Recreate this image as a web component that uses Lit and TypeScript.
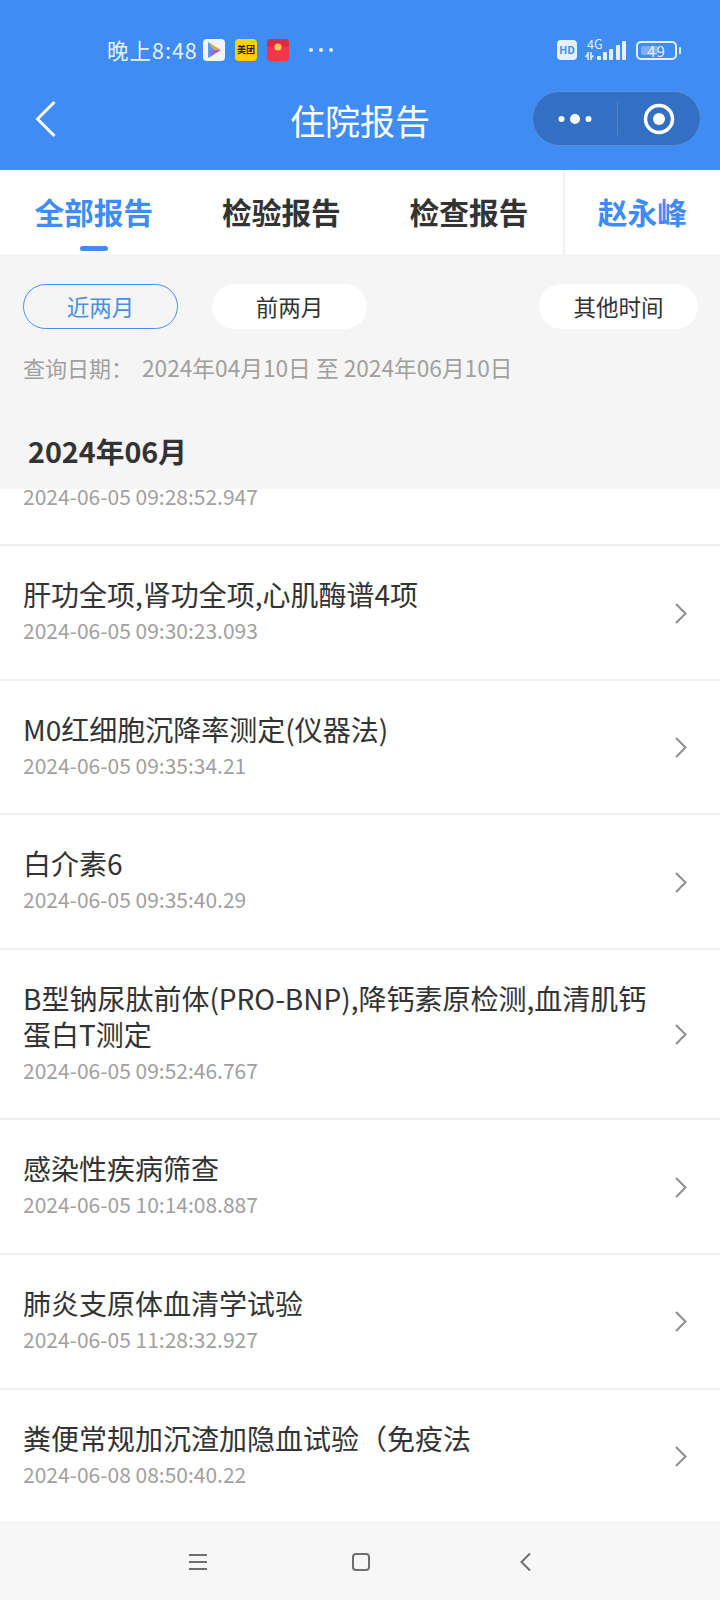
import { LitElement, html, css, svg } from "lit";
import { customElement } from "lit/decorators.js";

const rows: { title: string[]; time: string }[] = [
  { title: ["肝功全项,肾功全项,心肌酶谱4项"], time: "2024-06-05 09:30:23.093" },
  { title: ["M0红细胞沉降率测定(仪器法)"], time: "2024-06-05 09:35:34.21" },
  { title: ["白介素6"], time: "2024-06-05 09:35:40.29" },
  { title: ["B型钠尿肽前体(PRO-BNP),降钙素原检测,血清肌钙", "蛋白T测定"], time: "2024-06-05 09:52:46.767" },
  { title: ["感染性疾病筛查"], time: "2024-06-05 10:14:08.887" },
  { title: ["肺炎支原体血清学试验"], time: "2024-06-05 11:28:32.927" },
  { title: ["粪便常规加沉渣加隐血试验（免疫法"], time: "2024-06-08 08:50:40.22" },
];

const chevron = svg`<path d="M2 2 L11.5 11.5 L2 21" fill="none" stroke="#8e8e8e" stroke-width="2"/>`;

@customElement("app-root")
export class AppRoot extends LitElement {
  static styles = css`
    :host {
      display: block;
      width: 720px;
      height: 1600px;
      overflow: hidden;
      font-family: "Noto Sans CJK SC", "Noto Sans", sans-serif;
      background: #fff;
    }
    .page { display: flex; flex-direction: column; height: 1600px; }
    .header { background: #408cf5; height: 170px; flex: none; color: #fff; display: flex; flex-direction: column; }
    .status { display: flex; align-items: center; height: 30px; margin-top: 35px; padding-left: 107px; }
    .clock { font-size: 21.5px; line-height: 30px; color: #e6f0fd; letter-spacing: 1px; width: 96px; white-space: nowrap; }
    .app { width: 22px; height: 22px; border-radius: 4px; flex: none; margin-right: 10px; display: flex; align-items: center; justify-content: center; }
    .app svg { display: block; }
    .play { background: #f2f4f8; }
    .meituan { background: #ffd100; color: #222; font-size: 9px; line-height: 22px; font-weight: 700; white-space: nowrap; overflow: hidden; }
    .packet { background: #f5364a; }
    .more { display: flex; gap: 6px; margin-left: 10px; }
    .more i { width: 4px; height: 4px; border-radius: 50%; background: #e6f0fd; }
    .sys { margin-left: auto; margin-right: 39px; display: flex; align-items: center; }
    .hd { width: 20px; height: 20px; border-radius: 4px; background: #e6f0fd; color: #408cf5; font-size: 10.5px; line-height: 20px; font-weight: 700; text-align: center; margin-right: 8px; }
    .net { position: relative; width: 42px; height: 20px; margin-right: 9px; }
    .net span { position: absolute; left: 2px; top: -3px; font-size: 12.5px; line-height: 14px; color: #e6f0fd; }
    .net svg { position: absolute; left: 0; top: 0; }
    .battery { position: relative; width: 37px; border: 2px solid #e6f0fd; border-radius: 5px; box-sizing: content-box; height: 15px; }
    .battery b { position: absolute; left: 3px; top: 3px; bottom: 3px; width: 17px; background: #7fb0f5; border-radius: 2px; }
    .battery span { position: absolute; inset: 0; text-align: center; font-size: 15px; line-height: 15px; color: #e6f0fd; letter-spacing: 0.8px; }
    .nub { width: 2px; height: 7px; margin-left: 2px; background: #e6f0fd; border-radius: 1px; }
    .nav { position: relative; height: 55px; margin-top: 26px; display: flex; align-items: center; padding-left: 35px; padding-right: 19px; justify-content: space-between; }
    .back { display: block; }
    .title { position: absolute; left: 0; right: 0; top: 1px; text-align: center; font-size: 35px; line-height: 55px; color: #fff; }
    .capsule { position: relative; width: 169px; height: 55px; box-sizing: border-box; border-radius: 28px; background: #336fc2; border: 1px solid #5b8fd8; display: flex; align-items: center; }
    .cap-l { width: 84px; display: flex; justify-content: center; }
    .cap-sep { width: 1px; height: 33px; background: #5284cf; }
    .cap-r { flex: 1; display: flex; justify-content: center; }
    .tabs { flex: none; height: 84px; display: flex; background: #fff; }
    .tab { position: relative; width: 187.6px; font-size: 29.7px; line-height: 84px; font-weight: 700; color: #333; text-align: center; }
    .tab.on { color: #408cf5; }
    .tab.on::after { content: ""; position: absolute; left: 80px; top: 76px; width: 28px; height: 5px; border-radius: 3px; background: #408cf5; }
    .who { flex: 1; border-left: 2px solid #f0f0f0; font-size: 29.7px; line-height: 84px; font-weight: 700; color: #408cf5; text-align: center; }
    .filter { flex: none; height: 235px; background: #f5f5f5; box-sizing: border-box; padding: 30px 22px 0 23px; }
    .pills { display: flex; justify-content: space-between; }
    .pill { width: 155px; height: 45px; box-sizing: border-box; border-radius: 23px; background: #fff; color: #333; font-size: 22.5px; line-height: 45px; text-align: center; }
    .pill.on { background: transparent; border: 1.5px solid #4a90e2; color: #4a90e2; line-height: 42px; }
    .pill.p2 { margin-left: 34px; margin-right: auto; }
    .pill.p3 { width: 159px; }
    .date { margin-top: 20px; font-size: 22px; line-height: 36px; color: #a0a0a0; white-space: nowrap; display: flex; align-items: baseline; }
    .date span:first-child { width: 119px; }
    .date span:last-child { font-size: 22.7px; }
    .month { margin-top: 45px; margin-left: 5px; font-size: 28.7px; line-height: 40px; font-weight: 700; color: #333; }
    .list { flex: 1; min-height: 0; overflow: hidden; }
    .lead { height: 57px; box-sizing: border-box; border-bottom: 2px solid #eee; padding-left: 23px; font-size: 21px; line-height: 14px; color: #a0a0a0; }
    .row { border-bottom: 2px solid #eee; padding: 30px 32px 30.6px 23px; display: flex; align-items: center; justify-content: space-between; }
    .row-title { font-size: 28px; line-height: 36px; color: #333; white-space: nowrap; }
    .row-time { font-size: 21px; line-height: 36px; color: #a0a0a0; }
    .row svg { flex: none; display: block; margin-top: 2px; }
    .bottom { flex: none; height: 77px; background: #f7f7f7; position: relative; }
    .bottom svg { position: absolute; top: 29px; }
    .b1 { left: 188px; }
    .b2 { left: 351px; }
    .b3 { left: 518px; }
  `;

  render() {
    return html`<div class="page">
      <div class="header">
        <div class="status">
          <div class="clock">晚上8:48</div>
          <div class="app play">
            <svg width="16" height="18" viewBox="0 0 16 18">
              <path d="M2 1 L8 5 L8 13 L2 17 Z" fill="#3fa6f5"/>
              <path d="M2 1 L15 9 L8 9 Z" fill="#f5a23a"/>
              <path d="M4 9 L15 9 L4 16 Z" fill="#9a66e0"/>
            </svg>
          </div>
          <div class="app meituan">美团</div>
          <div class="app packet">
            <svg width="22" height="22" viewBox="0 0 22 22">
              <path d="M0 4 Q0 0 4 0 L18 0 Q22 0 22 4 L22 7 Q11 11 0 7 Z" fill="#e02a3e"/>
              <circle cx="11" cy="8" r="3.6" fill="#f8c95a"/>
            </svg>
          </div>
          <div class="more"><i></i><i></i><i></i></div>
          <div class="sys">
            <div class="hd">HD</div>
            <div class="net">
              <span>4G</span>
              <svg width="42" height="20" viewBox="0 0 42 20">
                <path d="M3 12 V20 M0.5 17 L3 14 M6 12 V20 M6 18 L8.5 15.5" stroke="#e6f0fd" stroke-width="1.6" fill="none"/>
                <g fill="#e6f0fd">
                  <rect x="12" y="16" width="4" height="4" rx="1"/>
                  <rect x="18" y="12" width="4" height="8" rx="1"/>
                  <rect x="24" y="9" width="4" height="11" rx="1"/>
                  <rect x="31" y="5" width="4" height="15" rx="1"/>
                  <rect x="37" y="1" width="4" height="19" rx="1"/>
                </g>
              </svg>
            </div>
            <div class="battery"><b></b><span>49</span></div>
            <div class="nub"></div>
          </div>
        </div>
        <div class="nav">
          <svg class="back" width="22" height="38" viewBox="0 0 22 38">
            <path d="M19.5 2 L2.5 19 L19.5 36" fill="none" stroke="#fff" stroke-width="3"/>
          </svg>
          <div class="title">住院报告</div>
          <div class="capsule">
            <div class="cap-l">
              <svg width="34" height="12" viewBox="0 0 34 12" fill="#fff">
                <circle cx="3.5" cy="6" r="3"/><circle cx="17" cy="6" r="5"/><circle cx="30.5" cy="6" r="3"/>
              </svg>
            </div>
            <div class="cap-sep"></div>
            <div class="cap-r">
              <svg width="32" height="32" viewBox="0 0 32 32">
                <circle cx="16" cy="16" r="13.5" fill="none" stroke="#fff" stroke-width="3.5"/>
                <circle cx="16" cy="16" r="6" fill="#fff"/>
              </svg>
            </div>
          </div>
        </div>
      </div>
      <div class="tabs">
        <div class="tab on">全部报告</div>
        <div class="tab">检验报告</div>
        <div class="tab">检查报告</div>
        <div class="who">赵永峰</div>
      </div>
      <div class="filter">
        <div class="pills">
          <div class="pill on">近两月</div>
          <div class="pill p2">前两月</div>
          <div class="pill p3">其他时间</div>
        </div>
        <div class="date"><span>查询日期：</span><span>2024年04月10日 至 2024年06月10日</span></div>
        <div class="month">2024年06月</div>
      </div>
      <div class="list">
        <div class="lead">2024-06-05 09:28:52.947</div>
        ${rows.map(
          (r) => html`<div class="row">
            <div>
              ${r.title.map((t) => html`<div class="row-title">${t}</div>`)}
              <div class="row-time">${r.time}</div>
            </div>
            <svg width="14" height="23" viewBox="0 0 14 23">${chevron}</svg>
          </div>`
        )}
      </div>
      <div class="bottom">
        <svg class="b1" width="20" height="20" viewBox="0 0 20 20">
          <path d="M1 3 H19 M1 10 H19 M1 17 H19" stroke="#6f6f6f" stroke-width="2"/>
        </svg>
        <svg class="b2" width="20" height="20" viewBox="0 0 20 20">
          <rect x="2" y="2" width="16" height="16" rx="3" fill="none" stroke="#6f6f6f" stroke-width="2"/>
        </svg>
        <svg class="b3" width="16" height="20" viewBox="0 0 16 20">
          <path d="M12 1.5 L3.5 10 L12 18.5" fill="none" stroke="#6f6f6f" stroke-width="2"/>
        </svg>
      </div>
    </div>`;
  }
}
